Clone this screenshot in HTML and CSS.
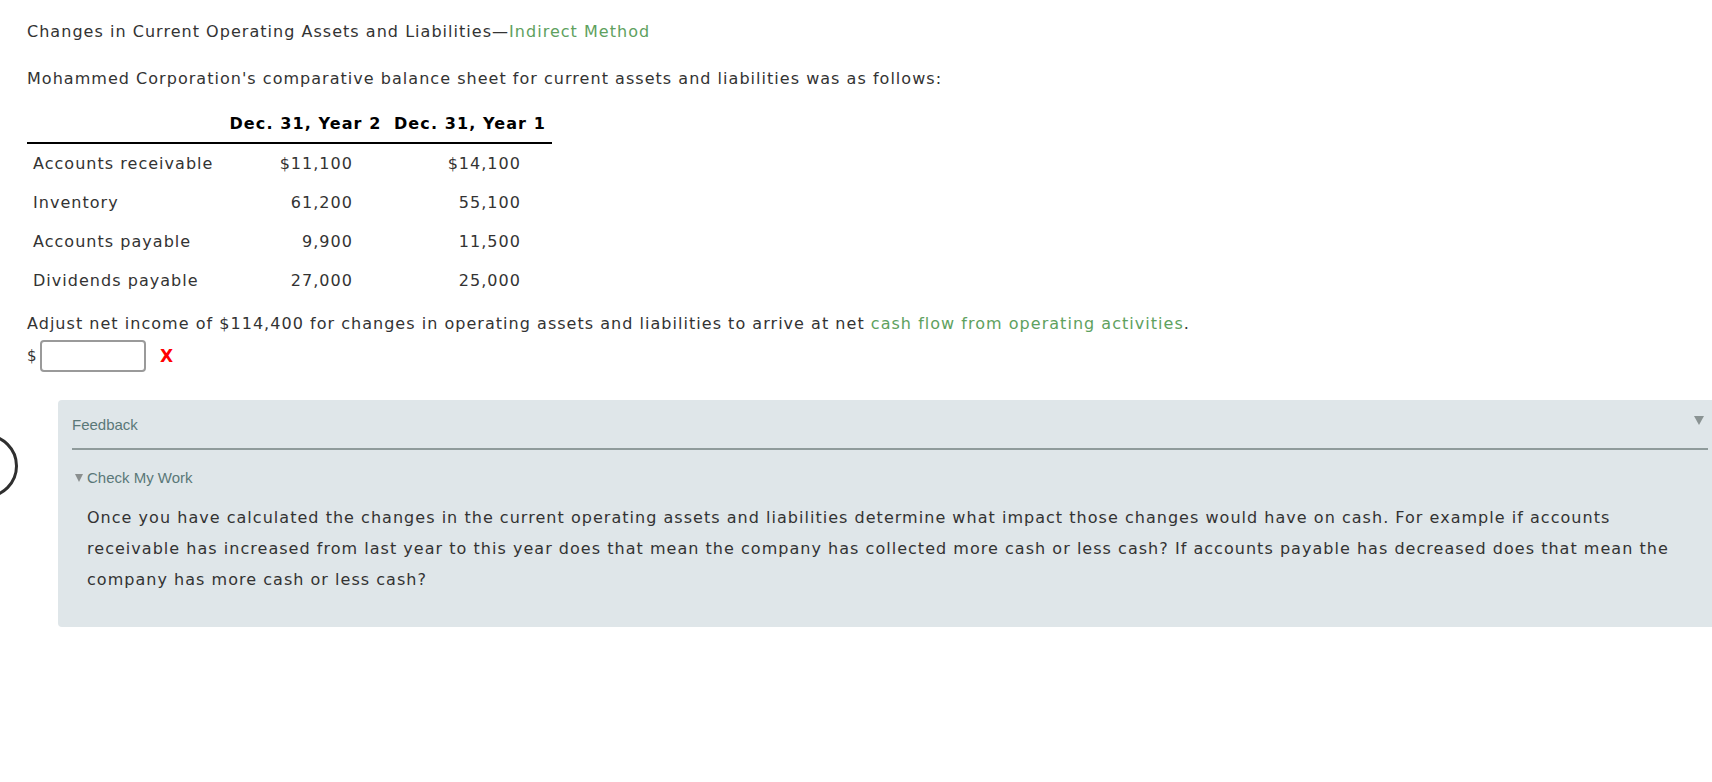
FILE: index.html
```html
<!DOCTYPE html>
<html>
<head>
<meta charset="utf-8">
<link rel="stylesheet" href="styles.css">
</head>
<body>
<div class="page">
  <p class="title">Changes in Current Operating Assets and Liabilities—<span class="green">Indirect Method</span></p>
  <p class="intro">Mohammed Corporation's comparative balance sheet for current assets and liabilities was as follows:</p>
  <table class="sheet">
    <thead>
      <tr>
        <th class="c-label"></th>
        <th class="c-one">Dec. 31, Year 2</th>
        <th class="c-two">Dec. 31, Year 1</th>
      </tr>
    </thead>
    <tbody>
      <tr><td class="c-label">Accounts receivable</td><td class="c-one">$11,100</td><td class="c-two">$14,100</td></tr>
      <tr><td class="c-label">Inventory</td><td class="c-one">61,200</td><td class="c-two">55,100</td></tr>
      <tr><td class="c-label">Accounts payable</td><td class="c-one">9,900</td><td class="c-two">11,500</td></tr>
      <tr><td class="c-label">Dividends payable</td><td class="c-one">27,000</td><td class="c-two">25,000</td></tr>
    </tbody>
  </table>
  <p class="adjust">Adjust net income of $114,400 for changes in operating assets and liabilities to arrive at net <span class="green">cash flow from operating activities</span>.</p>
  <div class="answer">
    <span class="dollar">$</span><input class="field" type="text"><span class="wrong">X</span>
  </div>
</div>
<div class="feedback-zone">
  <div class="ring"></div>
  <div class="feedback">
    <div class="fb-head">
      <span class="fb-title">Feedback</span>
      <span class="fb-toggle"></span>
    </div>
    <div class="fb-check"><span class="tri"></span>Check My Work</div>
    <p class="fb-text">Once you have calculated the changes in the current operating assets and liabilities determine what impact those changes would have on cash. For example if accounts receivable has increased from last year to this year does that mean the company has collected more cash or less cash? If accounts payable has decreased does that mean the company has more cash or less cash?</p>
  </div>
</div>
</body>
</html>
```

FILE: styles.css
```css
html, body {
  margin: 0;
  padding: 0;
  background: #ffffff;
}
body {
  font-family: "DejaVu Sans", Verdana, sans-serif;
  font-size: 16px;
  letter-spacing: 1.03px;
  color: #333333;
}
.page {
  padding: 22px 0 0 27px;
}
.title, .intro, .adjust {
  margin: 0;
  line-height: 19px;
}
.intro {
  margin-top: 28px;
}
.green {
  color: #5ea15e;
}
.sheet {
  border-collapse: collapse;
  table-layout: fixed;
  margin-top: 25px;
  width: 525px;
}
.sheet th {
  font-weight: bold;
  letter-spacing: 1.1px;
  padding: 0 0 8px 0;
  height: 21px;
  line-height: 19px;
  text-align: center;
  border-bottom: 2px solid #000000;
  color: #000000;
  white-space: nowrap;
}
.sheet td {
  height: 39px;
  padding: 0;
  line-height: 19px;
  white-space: nowrap;
}
.sheet .c-label {
  width: 196px;
  text-align: left;
}
.sheet td.c-label {
  padding-left: 6px;
}
.sheet .c-one {
  width: 165px;
}
.sheet .c-two {
  width: 164px;
}
.sheet td.c-one {
  text-align: right;
  padding-right: 35px;
}
.sheet td.c-two {
  text-align: right;
  padding-right: 31px;
}
.adjust {
  margin-top: 14px;
}
.answer {
  display: flex;
  align-items: center;
  margin-top: 7px;
  height: 32px;
}
.dollar {
  width: 13px;
  font-size: 15px;
  letter-spacing: 0;
}
.field {
  box-sizing: border-box;
  width: 106px;
  height: 32px;
  border: 2px solid #9a9a9a;
  border-radius: 4px;
  margin: 0;
  padding: 0 4px;
  background: #ffffff;
  font-family: inherit;
}
.wrong {
  color: #ff0000;
  font-family: "DejaVu Sans", sans-serif;
  font-weight: bold;
  font-size: 17px;
  letter-spacing: 0;
  margin-left: 14px;
}
.feedback-zone {
  position: relative;
  padding: 28px 0 0 58px;
}
.ring {
  position: absolute;
  left: -46px;
  top: 62px;
  width: 58px;
  height: 58px;
  border: 3px solid #2f2f2f;
  border-radius: 50%;
}
.feedback {
  background: #dfe6e9;
  border-radius: 4px 0 0 4px;
  padding: 14px 4px 32px 14px;
}
.fb-head {
  display: flex;
  justify-content: space-between;
  align-items: flex-start;
  font-family: "Liberation Sans", Arial, sans-serif;
  font-size: 15px;
  letter-spacing: 0;
  line-height: 17px;
  color: #5a7878;
  padding-top: 2px;
  padding-bottom: 15px;
  border-bottom: 2px solid #8f9b9b;
}
.fb-toggle {
  width: 0;
  height: 0;
  margin-top: 0;
  margin-right: 4px;
  border-left: 5px solid transparent;
  border-right: 5px solid transparent;
  border-top: 9px solid #8a9393;
}
.fb-check {
  display: flex;
  align-items: center;
  font-family: "Liberation Sans", Arial, sans-serif;
  font-size: 15px;
  letter-spacing: 0;
  line-height: 17px;
  color: #5a7878;
  margin-top: 19px;
  margin-left: 3px;
}
.tri {
  width: 0;
  height: 0;
  border-left: 4px solid transparent;
  border-right: 4px solid transparent;
  border-top: 8px solid #8a8f8f;
  margin-right: 4px;
}
.fb-text {
  margin: 16px 20px 0 15px;
  line-height: 31px;
  color: #333333;
}
```
